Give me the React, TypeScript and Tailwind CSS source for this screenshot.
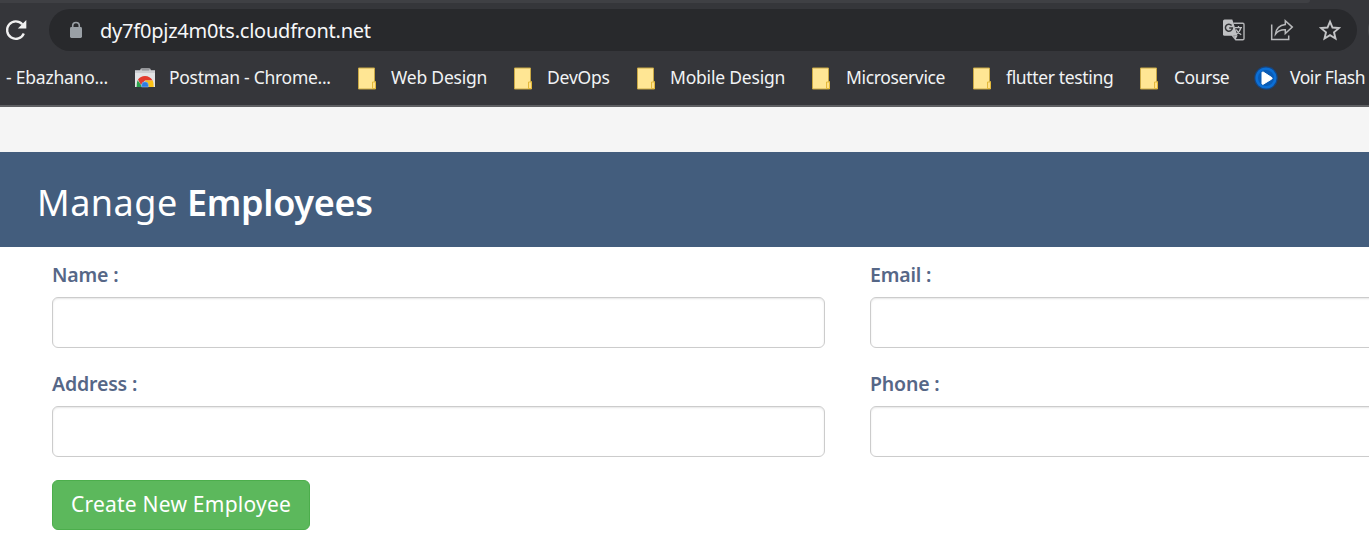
import React from "react";

function FolderIcon() {
  return (
    <svg className="h-[23px] w-[19px] shrink-0" viewBox="0 0 19 23">
      <path d="M.5 1h16v13.500h1v7.500H.5z" fill="#ffe694" stroke="#c9a845" strokeWidth="1" />
      <path d="M14.500 21.500v-6.500h3v6.500z" fill="#ffe08a" stroke="#e3b93a" strokeWidth="1" />
    </svg>
  );
}

function WebStoreIcon() {
  return (
    <svg className="h-[20px] w-[20px] shrink-0" viewBox="0 0 20 20">
      <path d="M6 3V1.800Q6 1 6.800 1h7.400q.8 0 .8.800V3" fill="none" stroke="#b5b6ba" strokeWidth="1.600" />
      <path d="M0 2.500h20V19H0z" fill="#e2e3e5" />
      <path d="M0 2.500h20v2.500H0z" fill="#cdced2" />
      <path d="M3 11.500Q5.500 8 10 8q5 0 7.600 4.500H10L6 17z" fill="#e33b2e" />
      <path d="M2.600 12.200Q1.600 14.500 1.600 19H7.500L5.700 16.500z" fill="#2ba24c" />
      <path d="M10 12.500h7.800Q18.700 14.500 18.700 19H12z" fill="#fbc116" />
      <path d="M6.600 19v-1.800a3.400 3.400 0 0 1 6.800 0V19z" fill="#2e7de1" stroke="#9cc1ee" strokeWidth=".5" />
    </svg>
  );
}

function PlayIcon() {
  return (
    <svg className="h-[24px] w-[24px] shrink-0" viewBox="0 0 24 24">
      <circle cx="12" cy="12" r="11.800" fill="#17457f" />
      <circle cx="12" cy="12" r="10.600" fill="#0b6fd6" />
      <circle cx="12" cy="12" r="8" fill="#0a5bb5" />
      <path d="M8 6.500v11.300q.3.900 1.300.400L17.800 13q.7-.7 0-1.400L9.300 6.100Q8.300 5.600 8 6.500z" fill="#fff" stroke="#fff" strokeWidth="1" />
    </svg>
  );
}

function ReloadIcon() {
  return (
    <svg className="h-[22px] w-[22px]" viewBox="0 0 22 22">
      <path d="M18.800 14.500A8.700 8.700 0 1 1 17.300 5.300" fill="none" stroke="#f1f1f1" strokeWidth="2.300" />
      <path d="M21.300 1v8.500h-8.500z" fill="#f1f1f1" />
    </svg>
  );
}

function LockIcon() {
  return (
    <svg className="h-[18px] w-[14px]" viewBox="0 0 14 18">
      <path d="M3.700 7V4.800a3.300 3.300 0 0 1 6.600 0V7" fill="none" stroke="#9aa0a6" strokeWidth="1.600" />
      <rect x="1" y="6" width="12" height="11" rx="1.400" fill="#9aa0a6" />
    </svg>
  );
}

function TranslateIcon() {
  return (
    <svg className="h-[22px] w-[22px]" viewBox="0 0 22 22">
      <path d="M10.500 4.200h9.300q1.200 0 1.200 1.200v14.100q0 1.200-1.200 1.200h-7L9 16" fill="none" stroke="#b4b5b7" strokeWidth="1.400" />
      <path d="M1.500.5h7.800l1.200 3.600 4 12.700H1.500Q0 16.800 0 15.300V2Q0 .5 1.500.5z" fill="#bfc0c2" />
      <path d="M11 17l3.500-.2-2 3.900z" fill="#bfc0c2" />
      <path d="M8.600 6.500A3.500 3.500 0 1 0 9.400 9H6.200" fill="none" stroke="#36373a" strokeWidth="1.500" />
      <path d="M12 8.700h7M15.500 7v1.700M17.800 8.700q-.7 4-4.500 6.500M13.200 10.500q1.500 3.200 5 5.300" fill="none" stroke="#bfc0c2" strokeWidth="1.300" />
    </svg>
  );
}

function ShareIcon() {
  return (
    <svg className="h-[22px] w-[24px]" viewBox="0 0 24 22">
      <path d="M1.700 5.500v15h17v-4" fill="none" stroke="#b9babc" strokeWidth="1.500" />
      <path d="M15.300 1.800l7 6.300-7 6.400v-3.700q-6.500-.3-9.800 4.200 1-8.300 9.800-9.500z" fill="none" stroke="#b9babc" strokeWidth="1.500" />
    </svg>
  );
}

function StarIcon() {
  return (
    <svg className="h-[22px] w-[22px]" viewBox="0 0 22 22">
      <path d="M11 2.600l2.500 5.900 6.400.6-4.900 4.200 1.500 6.200L11 16.200l-5.500 3.300L7 13.300 2.100 9.100l6.400-.6z" fill="none" stroke="#c4c5c7" strokeWidth="1.900" />
    </svg>
  );
}

const bookmarks = [
  { text: "- Ebazhano...", icon: null, cell: "w-[129px] pl-[6px]", gap: "", track: "tracking-[-0.22px]" },
  { text: "Postman - Chrome...", icon: <WebStoreIcon />, cell: "w-[223px] pl-[6px]", gap: "w-[34px]", track: "tracking-[-0.29px]" },
  { text: "Web Design", icon: <FolderIcon />, cell: "w-[156px] pl-[6px]", gap: "w-[33px]", track: "tracking-[-0.2px]" },
  { text: "DevOps", icon: <FolderIcon />, cell: "w-[123px] pl-[6px]", gap: "w-[33px]", track: "tracking-[-0.2px]" },
  { text: "Mobile Design", icon: <FolderIcon />, cell: "w-[175px] pl-[6px]", gap: "w-[33px]", track: "tracking-[-0.2px]" },
  { text: "Microservice", icon: <FolderIcon />, cell: "w-[161px] pl-[6px]", gap: "w-[34px]", track: "tracking-[-0.36px]" },
  { text: "flutter testing", icon: <FolderIcon />, cell: "w-[167px] pl-[6px]", gap: "w-[33px]", track: "tracking-[-0.35px]" },
  { text: "Course", icon: <FolderIcon />, cell: "w-[114px] pl-[6px]", gap: "w-[34px]", track: "tracking-[-0.45px]" },
  { text: "Voir Flash", icon: <PlayIcon />, cell: "w-[121px] pl-[6px]", gap: "w-[36px]", track: "tracking-[-0.45px]" },
];

function Field({ label }: { label: string }) {
  return (
    <label className="block">
      <span className="block h-[25px] text-[19.500px] leading-[25px] font-semibold tracking-[-0.17px] whitespace-nowrap text-[#566787]">{label}</span>
      <input className="mt-[10px] block h-[51px] w-full rounded-[6px] border border-[#ccc] bg-white px-4 shadow-[inset_0_1px_2px_rgba(0,0,0,0.1)]" />
    </label>
  );
}

export default function App() {
  return (
    <div className="flex h-[547px] w-full flex-col overflow-hidden bg-white font-['Noto_Sans',sans-serif]">
      <header className="flex h-[107px] shrink-0 flex-col overflow-hidden border-b-2 border-[#5e5f62] bg-[#35363a]">
        <div className="h-[3px] w-[1310px] shrink-0 rounded-br-[6px] bg-[#3f4044]" />
        <div className="flex h-[54px] shrink-0 items-start pt-[6px]">
          <div className="w-[49px] shrink-0 pt-[10px] pl-[5px]"><ReloadIcon /></div>
          <div className="flex h-[42px] w-[1308px] shrink-0 items-center rounded-full bg-[#28292c] pr-[16px] pl-[20px]">
            <LockIcon />
            <span className="ml-[17px] flex-1 pt-[1px] text-[20px] leading-[28px] tracking-[-0.22px] whitespace-nowrap text-[#f6f7f9]">dy7f0pjz4m0ts.cloudfront.net</span>
            <div className="flex items-center gap-[25px]"><TranslateIcon /><ShareIcon /><StarIcon /></div>
          </div>
          <div className="ml-[11px] h-[42px] w-[42px] shrink-0 rounded-full bg-[#47484b]" />
        </div>
        <nav className="flex h-[42px] shrink-0 items-center">
          {bookmarks.map((b) => (
            <div key={b.text} className={"flex shrink-0 items-center overflow-hidden " + b.cell}>
              {b.icon && <span className={"flex shrink-0 " + b.gap}>{b.icon}</span>}
              <span className={"-mt-[2px] text-[17.500px] leading-[26px] whitespace-nowrap text-[#f1f3f4] " + b.track}>{b.text}</span>
            </div>
          ))}
        </nav>
      </header>
      <main className="flex-1 bg-[#f5f5f5] pt-[45px]">
        <div className="h-[95px] bg-[#435d7d] pt-[26px] pl-[37px]">
          <h2 className="flex text-[36px] leading-[50px] whitespace-nowrap text-white">
            <span className="w-[150px] font-normal tracking-[0.5px]">Manage</span>
            <b className="font-semibold tracking-[-0.3px]">Employees</b>
          </h2>
        </div>
        <form className="h-[300px] bg-white pt-[15px] pl-[52px]">
          <div className="grid w-[1591px] grid-cols-[773px_773px] gap-x-[45px] gap-y-[23px]">
            <Field label="Name :" />
            <Field label="Email :" />
            <Field label="Address :" />
            <Field label="Phone :" />
          </div>
          <button type="button" className="mt-[23px] flex h-[50px] w-[258px] items-center justify-center rounded-[6px] border border-[#4cae4c] bg-[#5cb85c] pb-[1px] text-[21px] tracking-[0.23px] whitespace-nowrap text-white">
            Create New Employee
          </button>
        </form>
      </main>
    </div>
  );
}
